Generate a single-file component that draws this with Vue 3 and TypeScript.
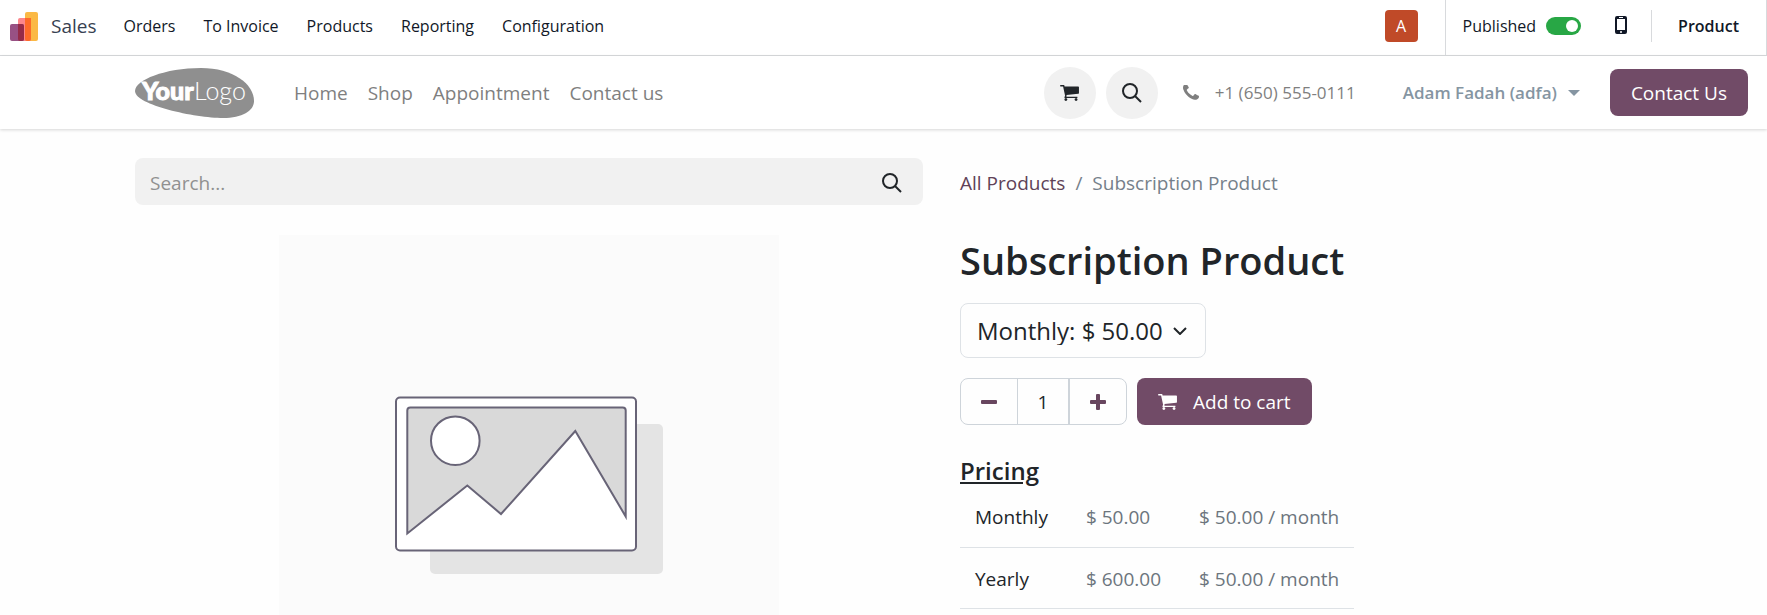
<script setup lang="ts">
import { ref } from 'vue'

interface Plan {
  name: string
  price: string
  rate: string
}

const menu: string[] = ['Orders', 'To Invoice', 'Products', 'Reporting', 'Configuration']
const pages: string[] = ['Home', 'Shop', 'Appointment', 'Contact us']
const plans: Plan[] = [
  { name: 'Monthly', price: '$ 50.00', rate: '$ 50.00 / month' },
  { name: 'Yearly', price: '$ 600.00', rate: '$ 50.00 / month' },
]

const published = ref(true)
const search = ref('')
const selected = ref('Monthly')
const quantity = ref(1)

function decrease(): void {
  if (quantity.value > 1) quantity.value--
}

function increase(): void {
  quantity.value++
}
</script>

<template>
  <div class="page">
    <header class="backend">
      <a class="brand" href="#">
        <svg class="brand-icon" viewBox="0 0 28 29" aria-hidden="true">
          <rect x="15" y="0" width="13" height="29" rx="2" fill="#fbb945" />
          <rect x="8" y="6" width="13" height="23" rx="2" fill="#fc868b" />
          <path d="M15 6h6v21a2 2 0 0 1-2 2h-2a2 2 0 0 1-2-2z" fill="#fd6a2a" />
          <rect x="0" y="12" width="14" height="17" rx="2" fill="#985184" />
          <path d="M8 12h4a2 2 0 0 1 2 2v13a2 2 0 0 1-2 2h-2a2 2 0 0 1-2-2z" fill="#962b48" />
        </svg>
        <span>Sales</span>
      </a>
      <nav class="menu" aria-label="Application">
        <a v-for="item in menu" :key="item" href="#">{{ item }}</a>
      </nav>
      <button class="avatar" type="button" aria-label="Account">A</button>
      <div class="tools">
        <label class="publish">
          <span>Published</span>
          <input v-model="published" class="switch" type="checkbox" />
        </label>
        <button class="mobile" type="button" aria-label="Mobile preview">
          <svg viewBox="0 0 12 18" aria-hidden="true">
            <path fill="currentColor" fill-rule="evenodd" d="M2 0h8a2 2 0 0 1 2 2v14a2 2 0 0 1-2 2H2a2 2 0 0 1-2-2V2a2 2 0 0 1 2-2zM2 3v11h8V3zM4 1v1h4V1zM6 15a1 1 0 1 0 0 2a1 1 0 0 0 0-2z" />
          </svg>
        </button>
        <a class="product-link" href="#">Product</a>
      </div>
    </header>

    <header class="site">
      <a class="logo" href="#" aria-label="Your Logo">
        <svg viewBox="0 0 119 50" aria-hidden="true">
          <path d="M0 23C0 12 30 0 66 0C98 0 119 16 119 33C119 43 107 50 88 50C60 50 0 37 0 23z" fill="#8f8f8f" />
          <text class="logo-bold" x="7" y="32">Your</text>
          <text class="logo-light" x="59" y="32">Logo</text>
        </svg>
      </a>
      <nav class="pages" aria-label="Website">
        <a v-for="item in pages" :key="item" href="#">{{ item }}</a>
      </nav>
      <div class="rounds">
        <a class="round" href="#" aria-label="Cart">
          <svg class="cart" viewBox="64 256 1664 1408" aria-hidden="true">
            <path fill="currentColor" d="M704 1536q0 52-38 90t-90 38-90-38-38-90 38-90 90-38 90 38 38 90zm896 0q0 52-38 90t-90 38-90-38-38-90 38-90 90-38 90 38 38 90zm128-1088v512q0 24-16.500 42.500t-40.500 21.500l-1044 122q13 60 13 70 0 16-24 64h920q26 0 45 19t19 45-19 45-45 19h-1024q-26 0-45-19t-19-45q0-11 8-31.500t16-36 21.500-40 15.500-29.500l-177-823h-204q-26 0-45-19t-19-45 19-45 45-19h256q16 0 28.500 6.500t19.500 15.500 13 24.500 8 26 5.500 29.500 4.500 26h1201q26 0 45 19t19 45z" />
          </svg>
        </a>
        <button class="round" type="button" aria-label="Search">
          <svg class="lens" viewBox="0 0 20 20" aria-hidden="true">
            <circle cx="8" cy="8" r="7" />
            <path d="M13 13l6 6" />
          </svg>
        </button>
      </div>
      <a class="phone" href="#">
        <svg viewBox="192 256 1408 1280" aria-hidden="true">
          <path fill="currentColor" d="M1600 1240q0 27-10 70.500t-21 68.500q-21 50-122 106-94 51-186 51-27 0-53-3.500t-57.500-12.500-47-14.500-55.500-20.500-49-18q-98-35-175-83-127-79-264-216t-216-264q-48-77-83-175-3-9-18-49t-20.500-55.500-14.500-47-12.500-57.500-3.500-53q0-92 51-186 56-101 106-122 25-11 68.500-21t70.500-10q14 0 21 3 18 6 53 76 11 19 30 54t35 63.500 31 53.500q3 4 17.500 25t21.500 35.500 7 28.500q0 20-28.500 50t-62 55-62 53-28.500 46q0 9 5 22.500t8.500 20.500 14 24 11.500 19q76 137 174 235t235 174q2 1 19 11.500t24 14 20.500 8.500 22.500 5q18 0 46-28.500t53-62 55-62 50-28.500q14 0 28.500 7t35.500 21.500 25 17.500q25 15 53.500 31t63.500 35 54 30q70 35 76 53 3 7 3 21z" />
        </svg>
        <span>+1 (650) 555-0111</span>
      </a>
      <button class="user" type="button">
        <span>Adam Fadah (adfa)</span>
        <svg viewBox="0 0 12 6" aria-hidden="true"><path d="M0 0h12L6 6z" fill="currentColor" /></svg>
      </button>
      <a class="primary contact" href="#">Contact Us</a>
    </header>

    <main class="content">
      <section class="left">
        <form class="search" role="search" @submit.prevent>
          <input v-model="search" type="search" placeholder="Search..." aria-label="Search" />
          <button type="submit" aria-label="Search products">
            <svg class="lens" viewBox="0 0 20 20" aria-hidden="true">
              <circle cx="8" cy="8" r="7" />
              <path d="M13 13l6 6" />
            </svg>
          </button>
        </form>
        <svg class="picture" viewBox="0 0 500 500" role="img" aria-label="Product image placeholder">
          <rect width="500" height="500" fill="#fbfbfb" />
          <rect x="151" y="189" width="233" height="150" rx="5" fill="#e4e4e4" />
          <g stroke="#686477" stroke-width="2">
            <rect x="117" y="162.500" width="240" height="153" rx="4" fill="#fff" />
            <path d="M128.300 298.500V175.500a3 3 0 0 1 3-3H343.700a3 3 0 0 1 3 3V281.500L296.300 196L222 279L188.300 250.500z" fill="#d9d9d9" />
            <circle cx="176.300" cy="205.700" r="24.300" fill="#fff" />
          </g>
        </svg>
      </section>

      <section class="details">
        <nav class="crumbs" aria-label="Breadcrumb">
          <a href="#">All Products</a>
          <span>/</span>
          <span>Subscription Product</span>
        </nav>
        <h1>Subscription Product</h1>
        <div class="plan">
          <select v-model="selected" aria-label="Subscription plan">
            <option v-for="plan in plans" :key="plan.name" :value="plan.name">{{ plan.name }}: {{ plan.price }}</option>
          </select>
          <svg viewBox="0 0 14 8" aria-hidden="true"><path d="M1 1l6 6l6-6" /></svg>
        </div>
        <div class="buy">
          <div class="quantity">
            <button type="button" aria-label="Remove one" @click="decrease">
              <svg viewBox="0 0 16 16" aria-hidden="true"><rect y="6" width="16" height="4" rx="1" /></svg>
            </button>
            <input v-model.number="quantity" type="text" aria-label="Quantity" />
            <button type="button" aria-label="Add one" @click="increase">
              <svg viewBox="0 0 16 16" aria-hidden="true">
                <rect y="6" width="16" height="4" rx="1" />
                <rect x="6" width="4" height="16" rx="1" />
              </svg>
            </button>
          </div>
          <button class="primary add" type="button">
            <svg class="cart" viewBox="64 256 1664 1408" aria-hidden="true">
              <path fill="currentColor" d="M704 1536q0 52-38 90t-90 38-90-38-38-90 38-90 90-38 90 38 38 90zm896 0q0 52-38 90t-90 38-90-38-38-90 38-90 90-38 90 38 38 90zm128-1088v512q0 24-16.500 42.500t-40.500 21.500l-1044 122q13 60 13 70 0 16-24 64h920q26 0 45 19t19 45-19 45-45 19h-1024q-26 0-45-19t-19-45q0-11 8-31.500t16-36 21.500-40 15.500-29.500l-177-823h-204q-26 0-45-19t-19-45 19-45 45-19h256q16 0 28.500 6.500t19.500 15.500 13 24.500 8 26 5.500 29.500 4.500 26h1201q26 0 45 19t19 45z" />
            </svg>
            <span>Add to cart</span>
          </button>
        </div>
        <h2>Pricing</h2>
        <table>
          <tbody>
            <tr v-for="plan in plans" :key="plan.name">
              <th scope="row">{{ plan.name }}</th>
              <td>{{ plan.price }}</td>
              <td>{{ plan.rate }}</td>
            </tr>
          </tbody>
        </table>
      </section>
    </main>
  </div>
</template>

<style>
body {
  margin: 0;
}
</style>

<style scoped>
.page {
  height: 100vh;
  overflow-y: auto;
  scrollbar-width: none;
  background: #fefefe;
  color: #212529;
  font-family: "Open Sans", "Noto Sans", sans-serif;
  font-size: 19px;
  line-height: 28px;
}

.page *,
.page *::before {
  box-sizing: border-box;
}

a {
  color: inherit;
  text-decoration: none;
}

button,
input,
select {
  margin: 0;
  padding: 0;
  border: 0;
  background: none;
  color: inherit;
  font: inherit;
}

svg {
  display: block;
  flex: none;
}

.backend {
  display: flex;
  align-items: center;
  height: 56px;
  padding: 0 0 3px 10px;
  border-bottom: 1px solid #d8dadd;
  border-right: 1px solid #d8dadd;
  background: #fff;
  color: #111827;
  font-size: 16px;
  white-space: nowrap;
}

.brand {
  display: flex;
  align-items: center;
  gap: 13px;
  color: #374151;
  font-size: 19px;
}

.brand-icon {
  width: 28px;
  height: 29px;
}

.menu {
  display: flex;
  gap: 28px;
  margin-left: 27px;
}

.avatar {
  width: 33px;
  height: 32px;
  margin-left: auto;
  border-radius: 4px;
  background: #c04a28;
  color: #fff;
}

.tools {
  display: flex;
  align-items: center;
  align-self: stretch;
  margin: 0 0 -3px 27px;
  padding: 0 27px 3px 17px;
  border-left: 1px solid #d8dadd;
}

.publish {
  display: flex;
  align-items: center;
  gap: 10px;
}

.switch {
  display: flex;
  align-items: center;
  justify-content: flex-end;
  width: 35px;
  height: 18px;
  padding: 0 3px;
  border-radius: 9px;
  background: #28a745;
  appearance: none;
}

.switch:not(:checked) {
  justify-content: flex-start;
  background: #adb5bd;
}

.switch::before {
  width: 12px;
  height: 12px;
  border-radius: 50%;
  background: #fff;
  content: "";
}

.mobile {
  display: flex;
  align-items: center;
  height: 32px;
  padding: 0 24px 2px 34px;
  border-right: 1px solid #d8dadd;
}

.mobile svg {
  width: 12px;
  height: 18px;
}

.product-link {
  margin-left: 26px;
  font-weight: 600;
}

.site {
  display: flex;
  align-items: center;
  height: 73px;
  padding: 0 19px 0 135px;
  background: #fff;
  box-shadow: 0 1px 3px rgba(0, 0, 0, 0.16);
  white-space: nowrap;
}

.logo svg {
  width: 119px;
  height: 50px;
}

.logo text {
  fill: #fff;
  font-family: Lato, sans-serif;
  font-size: 25px;
}

.logo .logo-bold {
  stroke: #fff;
  font-weight: 900;
}

.logo .logo-light {
  font-weight: 300;
}

.pages {
  display: flex;
  gap: 20px;
  margin-left: 40px;
  color: #7f7f7f;
}

.rounds {
  display: flex;
  gap: 10px;
  margin-left: auto;
}

.round {
  display: flex;
  align-items: center;
  justify-content: center;
  width: 52px;
  height: 52px;
  border-radius: 50%;
  background: #f1f1f1;
}

.cart {
  width: 19px;
  height: 16px;
}

.lens {
  width: 20px;
  height: 20px;
  fill: none;
  stroke: currentColor;
  stroke-width: 2;
}

.phone {
  display: flex;
  align-items: center;
  gap: 16px;
  margin-left: 25px;
  color: #7f7f7f;
  font-size: 17px;
}

.phone svg {
  width: 16px;
  height: 15px;
}

.user {
  display: flex;
  align-items: center;
  gap: 11px;
  margin-left: 47px;
  color: #8595a2;
  font-size: 17px;
  font-weight: 600;
}

.user svg {
  width: 12px;
  height: 6px;
}

.primary {
  display: flex;
  align-items: center;
  height: 47px;
  border-radius: 8px;
  background: #714b67;
  color: #fff;
}

.contact {
  margin-left: 30px;
  padding: 0 21px;
}

.content {
  display: grid;
  grid-template-columns: 788fr 672fr;
  gap: 37px;
  padding: 29px 135px 0;
}

.search {
  display: flex;
  height: 47px;
  border-radius: 8px;
  background: #f1f1f1;
}

.search input {
  flex: 1;
  min-width: 0;
  padding: 2px 0 0 15px;
  outline: 0;
  appearance: none;
}

.search input::placeholder {
  color: #909090;
  opacity: 1;
}

.search button {
  padding: 2px 21px 0;
}

.picture {
  width: 500px;
  max-width: 100%;
  margin: 30px auto 0;
}

.crumbs {
  display: flex;
  align-items: center;
  gap: 10px;
  height: 50px;
  color: #75808a;
}

.crumbs a {
  color: #5f4257;
}

h1 {
  margin: 26px 0 17px;
  font-size: 38px;
  font-weight: 600;
  line-height: 52px;
}

.plan {
  display: grid;
  align-items: center;
  justify-items: end;
  width: 246px;
  margin-bottom: 20px;
}

.plan select,
.plan svg {
  grid-area: 1 / 1;
}

.plan select {
  width: 100%;
  height: 55px;
  padding: 0 16px;
  border: 1px solid #dee2e6;
  border-radius: 8px;
  font-size: 24px;
  appearance: none;
}

.plan svg {
  width: 14px;
  height: 8px;
  margin-right: 19px;
  fill: none;
  stroke: currentColor;
  stroke-width: 2;
  pointer-events: none;
}

.buy {
  display: flex;
  gap: 10px;
}

.quantity {
  display: flex;
  height: 47px;
  border: 1px solid #ced4da;
  border-radius: 8px;
}

.quantity button {
  display: flex;
  align-items: center;
  justify-content: center;
  width: 56px;
}

.quantity svg {
  width: 16px;
  height: 16px;
  fill: #68465f;
}

.quantity input {
  width: 53px;
  border-right: 2px solid #ced4da;
  border-left: 1px solid #ced4da;
  text-align: center;
}

.add {
  gap: 16px;
  padding: 0 21px;
}

h2 {
  display: table;
  margin: 30px 0 0;
  font-size: 24px;
  font-weight: 600;
  line-height: 31px;
  text-decoration: underline;
}

table {
  border-collapse: collapse;
}

th,
td {
  height: 61px;
  padding: 2px 23px 0 15px;
  border-bottom: 1px solid #dee2e6;
  font-weight: 400;
  text-align: left;
  white-space: nowrap;
}

td {
  color: #6c757d;
}

td:last-child {
  padding-right: 15px;
}
</style>
